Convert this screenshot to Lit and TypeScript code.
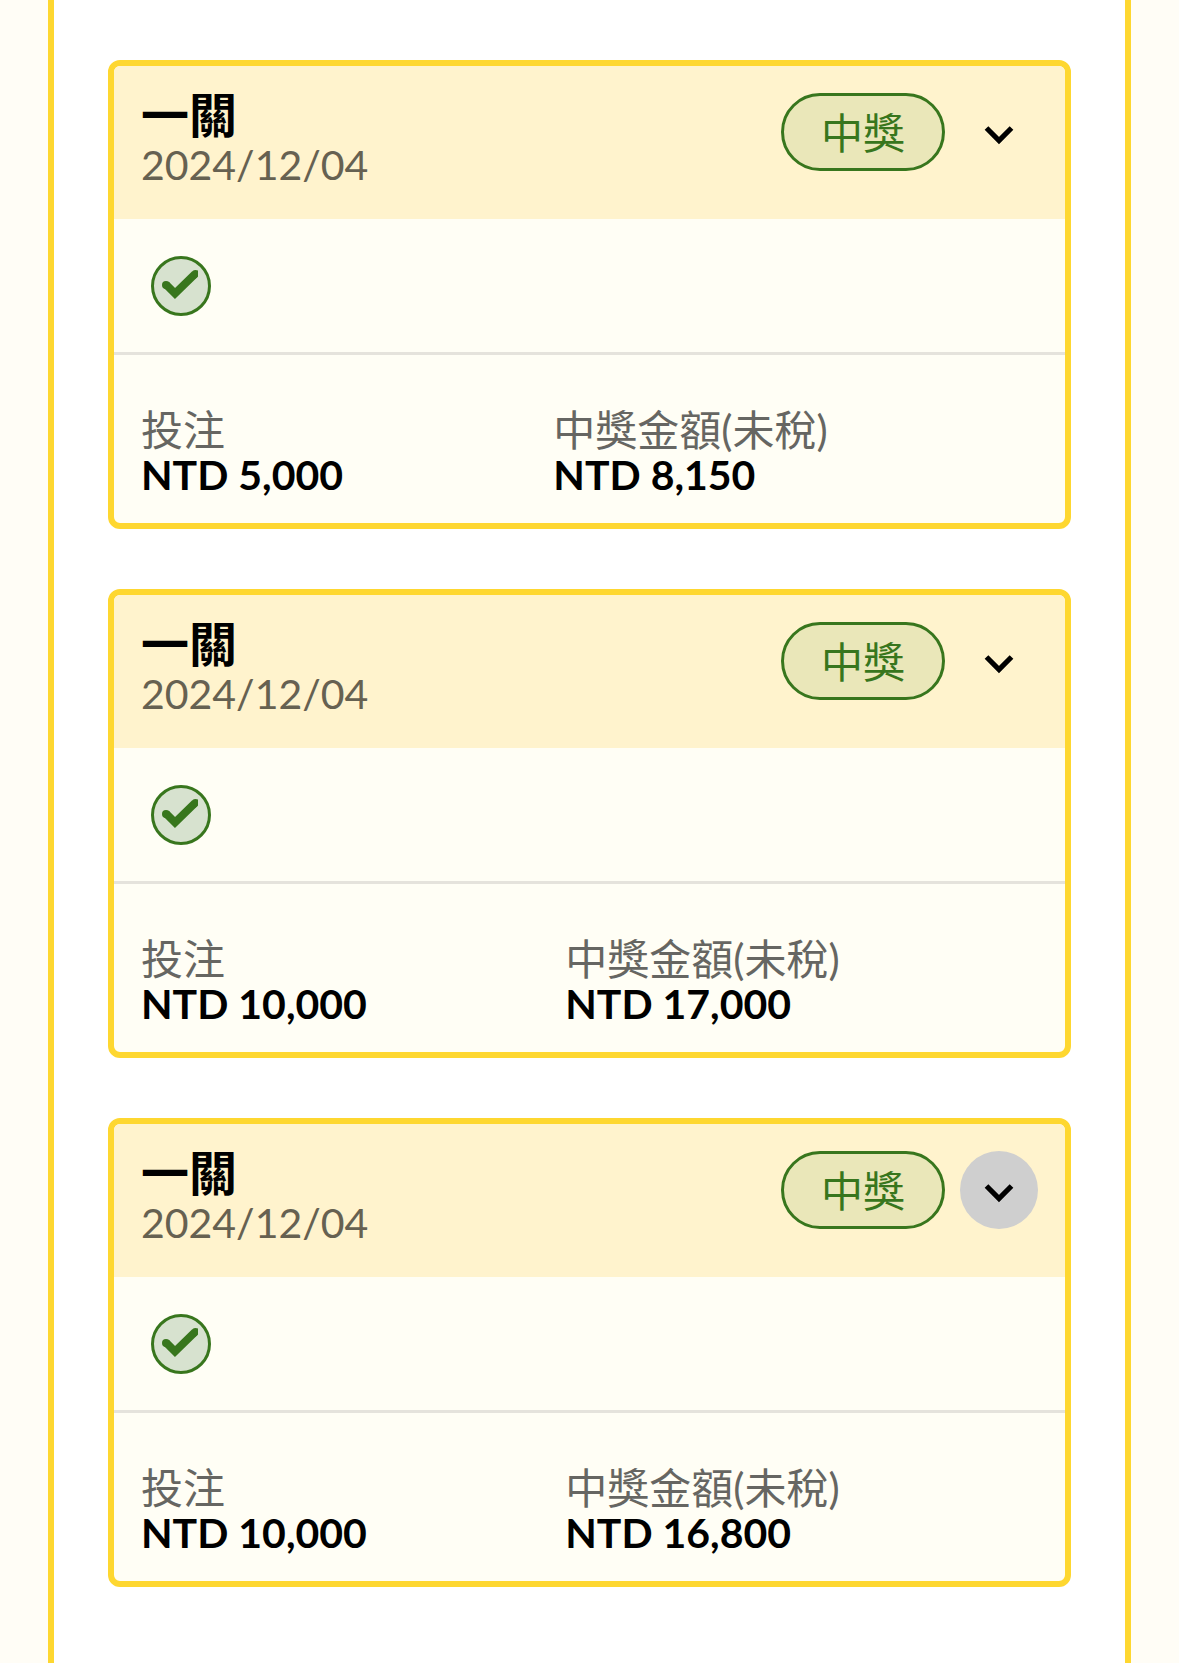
import { LitElement, html, css } from "lit";
import { customElement, property } from "lit/decorators.js";
import { classMap } from "lit/directives/class-map.js";

interface Bet {
  title: string;
  date: string;
  status: string;
  stake: string;
  payout: string;
  pressed: boolean;
}

const BETS: Bet[] = [
  { title: "一關", date: "2024/12/04", status: "中獎", stake: "NTD 5,000", payout: "NTD 8,150", pressed: false },
  { title: "一關", date: "2024/12/04", status: "中獎", stake: "NTD 10,000", payout: "NTD 17,000", pressed: false },
  { title: "一關", date: "2024/12/04", status: "中獎", stake: "NTD 10,000", payout: "NTD 16,800", pressed: true },
];

@customElement("bet-card")
export class BetCard extends LitElement {
  @property({ attribute: false }) bet!: Bet;

  static styles = css`
    :host {
      display: block;
    }
    .card {
      border: 6px solid #fed730;
      border-radius: 12px;
      background: #fffef5;
      overflow: hidden;
    }
    .header {
      display: flex;
      align-items: flex-start;
      gap: 15px;
      padding: 27px 27px 26px;
      background: #fff3cd;
    }
    .heading {
      flex: 1;
      min-width: 0;
    }
    .title {
      margin: 0;
      font-size: 48px;
      line-height: 44px;
      font-weight: 700;
      color: #000;
    }
    .date {
      display: block;
      font-size: 41px;
      line-height: 56px;
      color: #666151;
    }
    .status {
      box-sizing: border-box;
      height: 78px;
      padding: 0 37px;
      border: 3px solid #38761d;
      border-radius: 39px;
      background: #eae7b9;
      color: #38761d;
      font-size: 42px;
      line-height: 74px;
      white-space: nowrap;
    }
    .toggle {
      flex: none;
      width: 78px;
      height: 78px;
      padding: 0;
      border: 0;
      border-radius: 50%;
      background: transparent;
      color: #000;
    }
    .toggle.pressed {
      background: #cfcfcf;
    }
    .toggle svg,
    .result svg {
      display: block;
    }
    .result {
      padding: 37px 37px 36px;
      border-bottom: 3px solid #e5e3dc;
    }
    .amounts {
      display: flex;
      margin: 0;
      padding: 51px 27px 27px;
    }
    .amount {
      flex: 1 1 auto;
    }
    .label {
      font-size: 42px;
      line-height: 48px;
      color: #666662;
    }
    .value {
      margin: 0;
      font-size: 41px;
      line-height: 42px;
      font-weight: 700;
      color: #000;
    }
  `;

  render() {
    const b = this.bet;
    return html`
      <article class="card">
        <header class="header">
          <div class="heading">
            <h2 class="title">${b.title}</h2>
            <time class="date" datetime=${b.date.replaceAll("/", "-")}>${b.date}</time>
          </div>
          <span class="status">${b.status}</span>
          <button class=${classMap({ toggle: true, pressed: b.pressed })} type="button" aria-label="展開">
            <svg width="78" height="78" viewBox="0 0 78 78" fill="none" aria-hidden="true">
              <path d="M26.500 35 39 47.500l12.500-12.500" stroke="currentColor" stroke-width="5.200" />
            </svg>
          </button>
        </header>
        <div class="result">
          <svg width="60" height="60" viewBox="0 0 60 60" fill="none" role="img" aria-label=${b.status}>
            <circle cx="30" cy="30" r="28.500" fill="#d7e2cf" stroke="#38761d" stroke-width="3" />
            <path d="M15 28.500L24 37.500L44 18" stroke="#38761d" stroke-width="8" />
            <circle cx="15" cy="29" r="4" fill="#38761d" />
            <path d="M41.200 15.200Q44 13 47 14.500V20.500L44 23Z" fill="#38761d" />
          </svg>
        </div>
        <dl class="amounts">
          <div class="amount">
            <dt class="label">投注</dt>
            <dd class="value">${b.stake}</dd>
          </div>
          <div class="amount">
            <dt class="label">中獎金額(未稅)</dt>
            <dd class="value">${b.payout}</dd>
          </div>
        </dl>
      </article>
    `;
  }
}

@customElement("app-root")
export class AppRoot extends LitElement {
  static styles = css`
    :host {
      display: block;
      box-sizing: border-box;
      min-height: 100vh;
      padding: 0 48px;
      background: #fffdf6;
      font-family: Lato, "Noto Sans CJK TC", sans-serif;
    }
    .panel {
      box-sizing: border-box;
      min-height: 100vh;
      display: flex;
      flex-direction: column;
      gap: 60px;
      padding: 60px 54px;
      border: solid #fed730;
      border-width: 0 6px;
      background: #fff;
    }
  `;

  render() {
    return html`
      <main class="panel">
        ${BETS.map((bet) => html`<bet-card .bet=${bet}></bet-card>`)}
      </main>
    `;
  }
}
